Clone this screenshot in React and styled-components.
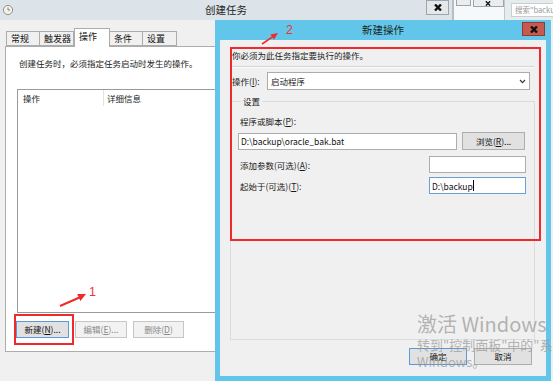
import React from "react";
import styled, { createGlobalStyle } from "styled-components";

const GlobalStyle = createGlobalStyle`
  html, body {
    margin: 0;
    padding: 0;
    background: #ffffff;
  }
  body {
    font-family: "Noto Sans CJK SC", "Liberation Sans", sans-serif;
    font-size: 8.5px;
    color: #1a1a1a;
    overflow: hidden;
  }
`;

const Desktop = styled.div`
  position: relative;
  width: 553px;
  height: 381px;
  overflow: hidden;
  background: #f0f0f0;
`;

/* ---------- background window: 创建任务 ---------- */

const BackWindow = styled.div`
  position: absolute;
  left: 0;
  top: 0;
  width: 452px;
  height: 381px;
  display: flex;
  flex-direction: column;
  background: #f0f0f0;
`;

const TitleBar = styled.div`
  height: 20px;
  flex: none;
  display: grid;
  grid-template-columns: 1fr auto 1fr;
  align-items: center;
  background: ${(p) => p.bg};
`;

const TitleText = styled.div`
  font-size: 10.5px;
  line-height: 20px;
  color: #1e1e1e;
`;

const TitleIcon = styled.div`
  justify-self: start;
  display: flex;
  padding-left: 2px;
`;

const CaptionButton = styled.div`
  justify-self: end;
  align-self: start;
  width: ${(p) => p.w}px;
  height: ${(p) => p.h}px;
  margin-top: ${(p) => p.top || 0}px;
  margin-right: ${(p) => p.right || 0}px;
  box-sizing: border-box;
  border: 1px solid ${(p) => p.border};
  background: ${(p) => p.bg};
  display: flex;
  align-items: center;
  justify-content: center;
`;

const BackBody = styled.div`
  flex: 1;
  padding: 8px 0 0 5px;
`;

const TabStrip = styled.div`
  display: flex;
  align-items: flex-end;
  height: 18px;
  margin-left: 1px;
`;

const Tab = styled.div`
  width: ${(p) => p.w}px;
  height: ${(p) => (p.active ? 19 : 15)}px;
  box-sizing: border-box;
  border: 1px solid #acacac;
  border-left-width: ${(p) => (p.first || p.active ? 1 : 0)}px;
  border-bottom: ${(p) => (p.active ? "none" : "1px solid #acacac")};
  background: ${(p) => (p.active ? "#ffffff" : "#f0f0f0")};
  margin-bottom: ${(p) => (p.active ? -1 : 0)}px;
  position: relative;
  z-index: ${(p) => (p.active ? 1 : 0)};
  padding-left: 4px;
  font-size: 9px;
  line-height: ${(p) => (p.active ? 15 : 13)}px;
  color: #111;
`;

const Panel = styled.div`
  width: 440px;
  height: 306px;
  box-sizing: border-box;
  border: 1px solid #acacac;
  background: #ffffff;
  padding: 10px 0 0 11px;
  display: flex;
  flex-direction: column;
`;

const PanelText = styled.div`
  line-height: 12px;
  padding-left: 2px;
`;

const ListBox = styled.div`
  margin-top: 20px;
  width: 420px;
  height: 224px;
  box-sizing: border-box;
  border: 1px solid #9a9a9a;
  background: #ffffff;
`;

const ListHeader = styled.div`
  display: flex;
  height: 16px;
`;

const HeaderCell = styled.div`
  width: ${(p) => p.w}px;
  box-sizing: border-box;
  padding-left: ${(p) => p.pad}px;
  line-height: 16px;
  border-right: ${(p) => (p.divider ? "1px solid #e3e3e3" : "none")};
  color: #222;
`;

const ButtonRow = styled.div`
  display: flex;
  gap: 6px;
  margin-top: 8px;
  margin-left: -1px;
`;

const Button = styled.div`
  width: ${(p) => p.w}px;
  height: ${(p) => p.h || 17}px;
  box-sizing: border-box;
  border: 1px solid ${(p) => (p.focus ? "#5a9ad8" : p.disabled ? "#c6c6c6" : "#adadad")};
  background: ${(p) => (p.disabled ? "#f2f2f2" : "#e1e1e1")};
  color: ${(p) => (p.disabled ? "#8a8a8a" : "#111")};
  display: flex;
  align-items: center;
  justify-content: center;
  line-height: 1;
`;

/* ---------- strip at top right ---------- */

const RightStrip = styled.div`
  position: absolute;
  left: 452px;
  top: 0;
  width: 101px;
  height: 20px;
  display: flex;
  background: #e6ebee;
`;

const MiniWindow = styled.div`
  width: 53px;
  box-sizing: border-box;
  border-left: 2px solid #b7bec3;
  border-right: 1px solid #c2c8cc;
  background: #f7f8f9;
  display: flex;
  align-items: flex-start;
  gap: 2px;
  padding-left: 2px;
`;

const MiniButton = styled.div`
  width: ${(p) => p.w}px;
  height: ${(p) => p.h}px;
  box-sizing: border-box;
  border: 1px solid #9ea4a8;
  border-top: none;
  background: #e9edf0;
  display: flex;
  align-items: flex-end;
  justify-content: center;
`;

const SearchBox = styled.div`
  margin: 3px 0 0 6px;
  width: 44px;
  height: 14px;
  box-sizing: border-box;
  border: 1px solid #c9cfd3;
  border-right: none;
  background: #ffffff;
  color: #9a9a9a;
  font-size: 7.5px;
  line-height: 12px;
  padding-left: 3px;
  white-space: nowrap;
  overflow: hidden;
`;

/* ---------- dialog: 新建操作 ---------- */

const Dialog = styled.div`
  position: absolute;
  left: 215px;
  top: 20px;
  width: 336px;
  height: 361px;
  box-sizing: border-box;
  background: #62c6ea;
  padding: 0 5px 5px 5px;
  display: flex;
  flex-direction: column;
`;

const DialogBody = styled.div`
  flex: 1;
  background: #f0f0f0;
  padding: 9px 12px 0 12px;
  display: flex;
  flex-direction: column;
`;

const Line = styled.div`
  line-height: 12px;
  height: 12px;
  white-space: nowrap;
`;

const Separator = styled.div`
  margin-top: 5px;
  height: 0;
  border-top: 1px solid #d5d5d5;
  border-bottom: 1px solid #fbfbfb;
`;

const ActionRow = styled.div`
  display: flex;
  align-items: center;
  margin-top: 4px;
  height: 18px;
`;

const ActionLabel = styled.div`
  width: 35px;
`;

const Select = styled.div`
  width: 263px;
  height: 18px;
  box-sizing: border-box;
  border: 1px solid #acacac;
  background: #ffffff;
  display: flex;
  align-items: center;
  justify-content: space-between;
  padding: 0 3px 0 3px;
`;

const Group = styled.fieldset`
  margin: 5px 0 0 -2px;
  width: 305px;
  height: 245px;
  box-sizing: border-box;
  border: 1px solid #d9dde0;
  padding: 8px 8px 0 7px;
  display: flex;
  flex-direction: column;
`;

const Legend = styled.legend`
  padding: 0 2px;
  margin-left: 3px;
  line-height: 12px;
`;

const FieldLabel = styled.div`
  padding-left: 2px;
  line-height: 12px;
  white-space: nowrap;
`;

const FieldRow = styled.div`
  display: flex;
  align-items: center;
  justify-content: ${(p) => p.justify || "flex-start"};
  gap: 5px;
  margin-top: ${(p) => p.top}px;
  height: ${(p) => p.h}px;
`;

const TextBox = styled.div`
  width: ${(p) => p.w}px;
  height: 17px;
  box-sizing: border-box;
  border: 1px solid ${(p) => (p.focus ? "#6a9fd2" : "#abadb3")};
  background: #ffffff;
  padding-left: 2px;
  display: flex;
  align-items: center;
  white-space: nowrap;
  color: #111;
`;

const Caret = styled.span`
  display: inline-block;
  width: 0;
  height: 11px;
  border-left: 1px solid #000;
`;

const DialogButtons = styled.div`
  display: flex;
  justify-content: flex-end;
  gap: 7px;
  margin-top: 8px;
  margin-right: 2px;
`;

/* ---------- overlays ---------- */

const RedFrame = styled.div`
  position: absolute;
  left: ${(p) => p.x}px;
  top: ${(p) => p.y}px;
  width: ${(p) => p.w}px;
  height: ${(p) => p.h}px;
  box-sizing: border-box;
  border: 2px solid #ee2a2a;
  pointer-events: none;
`;

const ArrowLayer = styled.svg`
  position: absolute;
  left: 0;
  top: 0;
  pointer-events: none;
`;

const Marker = styled.div`
  position: absolute;
  left: ${(p) => p.x}px;
  top: ${(p) => p.y}px;
  color: #ee3333;
  font-family: "Liberation Sans", sans-serif;
  font-size: 12.5px;
  line-height: 1;
`;

const Watermark = styled.div`
  position: absolute;
  left: 417px;
  top: 311px;
  color: rgba(150, 150, 150, 0.7);
  white-space: nowrap;
  pointer-events: none;
`;

const WatermarkTitle = styled.div`
  font-size: 20px;
  line-height: 25px;
`;

const WatermarkText = styled.div`
  font-size: 13px;
  line-height: 17px;
`;

const CloseX = ({ size = 8, stroke = 2.4 }) => (
  <svg width={size} height={size - 1} viewBox="0 0 8 7">
    <path d="M1 0.5 L7 6.5 M7 0.5 L1 6.5" stroke="#111" strokeWidth={stroke} fill="none" />
  </svg>
);

const ClockIcon = () => (
  <svg width="12" height="12" viewBox="0 0 12 12">
    <circle cx="6" cy="6" r="4.6" fill="#f4f1e6" stroke="#8f8f8f" strokeWidth="1" />
    <path d="M6 3.4 V6 H8" stroke="#777" strokeWidth="0.9" fill="none" />
  </svg>
);

const Chevron = () => (
  <svg width="7" height="5" viewBox="0 0 7 5">
    <path d="M1 1 L3.5 3.6 L6 1" stroke="#333" strokeWidth="1.1" fill="none" />
  </svg>
);

const tabs = [
  { label: "常规", w: 34 },
  { label: "触发器", w: 34 },
  { label: "操作", w: 36, active: true },
  { label: "条件", w: 33 },
  { label: "设置", w: 34 },
];

export default function App() {
  return (
    <>
      <GlobalStyle />
      <Desktop>
        <BackWindow>
          <TitleBar bg="#dde4e9">
            <TitleIcon>
              <ClockIcon />
            </TitleIcon>
            <TitleText>创建任务</TitleText>
            <CaptionButton w={23} h={15} right={3} border="#9ea6ab" bg="#e3e8eb">
              <CloseX />
            </CaptionButton>
          </TitleBar>
          <BackBody>
            <TabStrip>
              {tabs.map((t, i) => (
                <Tab key={t.label} w={t.w} active={t.active} first={i === 0}>
                  {t.label}
                </Tab>
              ))}
            </TabStrip>
            <Panel>
              <PanelText>创建任务时，必须指定任务启动时发生的操作。</PanelText>
              <ListBox>
                <ListHeader>
                  <HeaderCell w={86} pad={5} divider>
                    操作
                  </HeaderCell>
                  <HeaderCell w={200} pad={3}>
                    详细信息
                  </HeaderCell>
                </ListHeader>
              </ListBox>
              <ButtonRow>
                <Button w={53} focus>
                  新建(<u>N</u>)...
                </Button>
                <Button w={52} disabled>
                  编辑(<u>E</u>)...
                </Button>
                <Button w={51} disabled>
                  删除(<u>D</u>)
                </Button>
              </ButtonRow>
            </Panel>
          </BackBody>
        </BackWindow>

        <RightStrip>
          <MiniWindow>
            <MiniButton w={15} h={6} />
            <MiniButton w={32} h={7}>
              <CloseX size={6} stroke={2} />
            </MiniButton>
          </MiniWindow>
          <SearchBox>搜索"backup"</SearchBox>
        </RightStrip>

        <Dialog>
          <TitleBar bg="#62c6ea">
            <span />
            <TitleText>新建操作</TitleText>
            <CaptionButton w={23} h={14} top={2} right={1} border="#8f3b35" bg="#c75a50">
              <CloseX />
            </CaptionButton>
          </TitleBar>
          <DialogBody>
            <Line>你必须为此任务指定要执行的操作。</Line>
            <Separator />
            <ActionRow>
              <ActionLabel>
                操作(<u>I</u>):
              </ActionLabel>
              <Select>
                <span>启动程序</span>
                <Chevron />
              </Select>
            </ActionRow>
            <Group>
              <Legend>设置</Legend>
              <FieldLabel>
                程序或脚本(<u>P</u>):
              </FieldLabel>
              <FieldRow top={5} h={18}>
                <TextBox w={219}>D:\backup\oracle_bak.bat</TextBox>
                <Button w={63} h={18}>
                  浏览(<u>R</u>)...
                </Button>
              </FieldRow>
              <FieldRow top={6} h={17} justify="space-between">
                <FieldLabel>
                  添加参数(可选)(<u>A</u>):
                </FieldLabel>
                <TextBox w={97} />
              </FieldRow>
              <FieldRow top={4} h={17} justify="space-between">
                <FieldLabel>
                  起始于(可选)(<u>T</u>):
                </FieldLabel>
                <TextBox w={97} focus>
                  D:\backup
                  <Caret />
                </TextBox>
              </FieldRow>
            </Group>
            <DialogButtons>
              <Button w={58} focus>
                确定
              </Button>
              <Button w={58}>取消</Button>
            </DialogButtons>
          </DialogBody>
        </Dialog>

        <RedFrame x={14} y={314} w={60} h={31} />
        <RedFrame x={230} y={47} w={311} h={194} />

        <ArrowLayer width="553" height="381">
          <line x1="60" y1="306" x2="79.5" y2="297.5" stroke="#ee2a2a" strokeWidth="2" />
          <polygon points="86,294 80.4,300.9 77.2,294" fill="#ee2a2a" />
          <line x1="262" y1="44" x2="272.5" y2="36.8" stroke="#ee2a2a" strokeWidth="1.6" />
          <polygon points="278,33 274,39.6 270.4,34.4" fill="#ee2a2a" />
        </ArrowLayer>
        <Marker x={89} y={286}>1</Marker>
        <Marker x={286} y={24}>2</Marker>

        <Watermark>
          <WatermarkTitle>激活 Windows</WatermarkTitle>
          <WatermarkText>转到"控制面板"中的"系统"以激活</WatermarkText>
          <WatermarkText>Windows。</WatermarkText>
        </Watermark>
      </Desktop>
    </>
  );
}
